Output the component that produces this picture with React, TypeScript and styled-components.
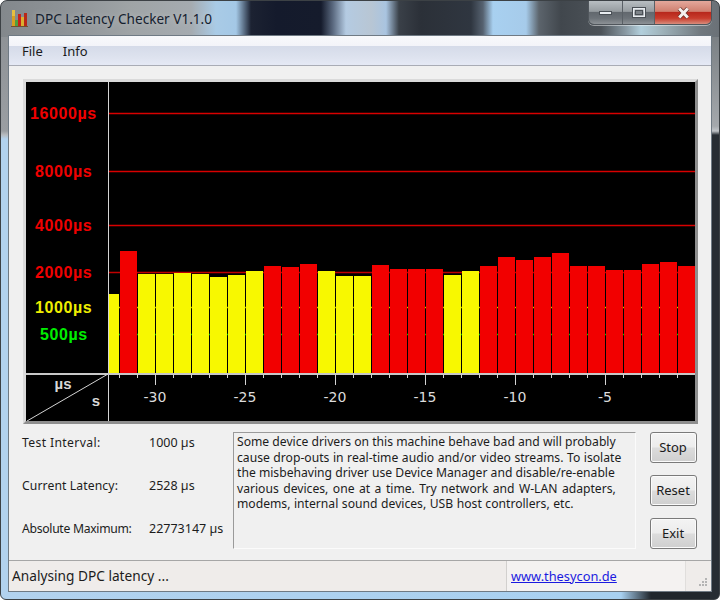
import React from "react";
import styled, { createGlobalStyle } from "styled-components";

const GlobalStyle = createGlobalStyle`
  html, body {
    margin: 0;
    padding: 0;
    background: #fff;
  }
`;

const uiFont = `"Noto Sans", "Open Sans", sans-serif`;

const titleGlass = `linear-gradient(90deg,
  #83888c 0, #8d9296 60px, #9fa4a6 130px, #a5abb0 190px, #a9cbe6 215px, #a4c8e6 235px,
  #1c2232 250px, #141a2c 275px, #151b2c 320px, #5b6a80 332px, #b4cbe2 345px, #b8c6d4 370px,
  #a9c4e0 385px, #3a4048 398px, #2b3038 420px, #2f3640 470px, #566270 482px, #a8d0f0 492px,
  #a6cbea 525px, #5c646c 538px, #41474d 560px, #4c5258 600px, #8a9aa4 625px, #b2cfdc 640px,
  #a0b4bc 660px, #70787e 700px, #6a7076 720px)`;

const Frame = styled.div`
  box-sizing: border-box;
  width: 720px;
  height: 600px;
  padding: 0 8px 8px;
  display: flex;
  flex-direction: column;
  border: 1px solid #3c4145;
  border-radius: 7px 7px 6px 6px;
  font-family: ${uiFont};
  color: #1c1c1c;
  background:
    ${titleGlass} top / 100% 36px no-repeat,
    linear-gradient(#8a8e92 0, #9a9ea2 130px, #b8bcc0 134px, #b2d2ee 138px, #b2d2ee 100%) left / 9px 100% no-repeat,
    linear-gradient(#6a7074 0, #a4a8ac 125px, #c0c4c8 130px, #272d33 134px, #272d33 100%) right / 9px 100% no-repeat,
    linear-gradient(90deg, #b2d2ee 0, #a8d0f0 620px, #20262c 650px, #20262c 100%);
`;

const TitleBar = styled.header`
  flex: 0 0 35px;
  display: flex;
  align-items: flex-start;
`;

const AppIcon = styled.svg`
  flex: none;
  width: 17px;
  height: 18px;
  margin: 8px 7px 0 2px;
`;

const TitleText = styled.h1`
  flex: 1;
  margin: 9px 0 0;
  font-size: 13.6px;
  line-height: 18px;
  font-weight: 400;
  color: #14202e;
  text-shadow: 0 0 6px rgba(255, 255, 255, 0.35);
`;

const CaptionButtons = styled.div`
  display: flex;
  height: 23px;
  margin-right: -1px;
  border: 1px solid #50565c;
  border-top: 0;
  border-radius: 0 0 6px 6px;
  overflow: hidden;
  box-shadow: 0 1px 0 rgba(255, 255, 255, 0.45);
`;

const CaptionButton = styled.div<{ $width: number; $close?: boolean }>`
  box-sizing: border-box;
  width: ${({ $width }) => $width}px;
  display: flex;
  align-items: center;
  justify-content: center;
  border-right: ${({ $close }) => ($close ? "0" : "1px solid #5a6066")};
  background: ${({ $close }) =>
    $close
      ? "linear-gradient(#e4a89c 0, #d08070 45%, #b8281c 50%, #c83c2c 75%, #d88c7c 100%)"
      : "linear-gradient(#b8bec2 0, #969ca0 45%, #62686e 50%, #6c7278 75%, #8d9296 100%)"};
`;

const Client = styled.div`
  flex: 1;
  min-height: 0;
  display: flex;
  flex-direction: column;
  background: #f0f0f0;
  box-shadow: 0 0 0 1px #6f7a84;
`;

const MenuBar = styled.nav`
  flex: 0 0 29px;
  display: flex;
  align-items: center;
  gap: 20px;
  padding-left: 13px;
  font-size: 13px;
  border-bottom: 1px solid #a9acb5;
  background: linear-gradient(#f8f9fb 0, #f3f4f9 33%, #d5dbe9 36%, #dde2ee 70%, #e5e9f5 100%);
`;

const MenuItem = styled.span`
  color: #1a1a1a;
`;

const ChartPanel = styled.section`
  box-sizing: border-box;
  flex: none;
  width: 675px;
  height: 345px;
  margin: 13px 0 0 14px;
  border: 3px solid;
  border-color: #dadada #8e8e8e #8e8e8e #dadada;
  background: #000;
`;

const ChartSvg = styled.svg`
  display: block;
  width: 669px;
  height: 339px;
`;

const AxisLabel = styled.text`
  font-family: "Liberation Sans", sans-serif;
  font-size: 16px;
  font-weight: 700;
  letter-spacing: 0.6px;
`;

const TimeLabel = styled.text`
  font-family: "DejaVu Sans", sans-serif;
  font-size: 14px;
  fill: #dcdcdc;
  text-anchor: middle;
`;

const CornerLabel = styled.text`
  font-family: "Liberation Sans", sans-serif;
  font-size: 15px;
  font-weight: 700;
  fill: #d8d8d8;
  text-anchor: middle;
`;

const InfoRow = styled.section`
  flex: none;
  display: flex;
  height: 117px;
  margin: 8px 0 0 13px;
`;

const Metrics = styled.dl`
  flex: 0 0 211px;
  margin: 0;
  display: grid;
  grid-template-columns: 127px auto;
  grid-auto-rows: 22px;
  row-gap: 21px;
  font-size: 12.2px;
  line-height: 22px;
`;

const MetricName = styled.dt<{ $spacing: number }>`
  margin: 0;
  letter-spacing: ${({ $spacing }) => $spacing}px;
`;

const MetricValue = styled.dd`
  margin: 0;
  white-space: nowrap;
  font-size: 12.5px;
`;

const Message = styled.div`
  box-sizing: border-box;
  flex: 0 0 403px;
  padding: 1px 3px;
  font-size: 12.15px;
  line-height: 15.6px;
  white-space: nowrap;
  border: 1px solid;
  border-color: #9a9a9a #fbfbfb #fbfbfb #9a9a9a;
`;

const MessageLine = styled.div<{ $wordSpacing?: number }>`
  word-spacing: ${({ $wordSpacing }) => $wordSpacing ?? 0}px;
`;

const Buttons = styled.div`
  flex: none;
  display: flex;
  flex-direction: column;
  justify-content: space-between;
  margin-left: 14px;
`;

const Button = styled.button`
  box-sizing: border-box;
  width: 47px;
  height: 31px;
  padding: 0 1px 2px 0;
  font-family: ${uiFont};
  font-size: 13px;
  color: #1a1a1a;
  border: 1px solid #7a7a7a;
  border-radius: 3px;
  box-shadow: inset 0 0 0 1px #fbfbfb;
  background: linear-gradient(#f3f3f3 0, #ececec 48%, #dcdcdc 52%, #cfcfcf 100%);
`;

const StatusBar = styled.footer`
  flex: 0 0 28px;
  display: flex;
  margin-top: auto;
  border-top: 1px solid #a6a6a6;
  line-height: 30px;
  background: #efecea;
`;

const StatusMain = styled.div`
  flex: 0 0 498px;
  box-sizing: border-box;
  padding-left: 3px;
  font-size: 13.7px;
  border-right: 1px solid #d2d0ce;
`;

const StatusLink = styled.a`
  flex: 0 0 179px;
  box-sizing: border-box;
  padding-left: 4px;
  font-size: 12.8px;
  color: #1a1ae0;
  text-decoration: underline;
  background: #f4f2f1;
  border-right: 1px solid #e0dedc;
`;

const Grip = styled.svg`
  align-self: flex-end;
  width: 12px;
  height: 12px;
  margin: 0 0 2px 10px;
`;

// bar tops in screen pixels, the first one is cut off by the axis
const bars: { top: number; hot: boolean }[] = [
  [251, 1], [274, 0], [274, 0], [273, 0], [274, 0], [277, 0], [275, 0], [271, 0],
  [266, 1], [267, 1], [264, 1], [271, 0], [276, 0], [276, 0], [265, 1], [269, 1],
  [269, 1], [269, 1], [275, 0], [271, 0], [266, 1], [257, 1], [260, 1], [257, 1],
  [253, 1], [266, 1], [266, 1], [270, 1], [270, 1], [264, 1], [262, 1], [266, 1],
].map(([top, hot]) => ({ top, hot: hot === 1 }));

const RED = "#f20000";
const YELLOW = "#f8f800";

const gridLines = [
  { y: 113, color: "#d80000", label: "16000µs", x: 30, fill: "#f00000" },
  { y: 171, color: "#d80000", label: "8000µs", x: 35, fill: "#f00000" },
  { y: 225, color: "#d80000", label: "4000µs", x: 35, fill: "#f00000" },
  { y: 272, color: "#c00000", label: "2000µs", x: 35, fill: "#f00000" },
  { y: 307, color: "#c0c000", label: "1000µs", x: 35, fill: "#eeee00" },
  { y: 334, color: "#00c000", label: "500µs", x: 40, fill: "#00ee00" },
];

const timeLabels = [-30, -25, -20, -15, -10, -5];

const Chart = () => (
  <ChartSvg viewBox="26 82 669 339">
    {gridLines.map(line => (
      <React.Fragment key={line.label}>
        <rect x={109} y={line.y - 0.25} width={586} height={1.5} fill={line.color} />
        <AxisLabel x={line.x} y={line.y + 6} fill={line.fill}>
          {line.label}
        </AxisLabel>
      </React.Fragment>
    ))}

    <rect x={109} y={294} width={10} height={79} fill={YELLOW} />
    {bars.map((bar, i) => (
      <rect
        key={i}
        x={120 + i * 18}
        y={bar.top}
        width={17}
        height={373 - bar.top}
        fill={bar.hot ? RED : YELLOW}
      />
    ))}

    <rect x={108} y={82} width={1} height={339} fill="#d4d4d4" />
    <rect x={26} y={373} width={669} height={2} fill="#c8c8c8" />
    <line x1={27} y1={421} x2={108} y2={374} stroke="#d4d4d4" strokeWidth={1} />

    {bars.map((_, i) => {
      const x = 119 + i * 18;
      const major = (x - 155) % 90 === 0;
      return <rect key={i} x={x} y={374} width={1} height={major ? 11 : 4} fill="#d4d4d4" />;
    })}

    {timeLabels.map((value, i) => (
      <TimeLabel key={value} x={155 + i * 90} y={402}>
        {value}
      </TimeLabel>
    ))}
    <CornerLabel x={63} y={389}>
      µs
    </CornerLabel>
    <CornerLabel x={96} y={406}>
      s
    </CornerLabel>
  </ChartSvg>
);

const App = () => (
  <>
    <GlobalStyle />
    <Frame>
      <TitleBar>
        <AppIcon viewBox="0 0 17 18">
          <rect x={1} y={1} width={3} height={16} fill="#d8a020" />
          <rect x={1} y={1} width={3} height={6} fill="#e8c040" />
          <rect x={4} y={11} width={3} height={6} fill="#50a040" />
          <rect x={7} y={5} width={3} height={12} fill="#c82018" />
          <rect x={10} y={8} width={3} height={9} fill="#d8b030" />
          <rect x={13} y={4} width={3} height={13} fill="#b82818" />
          <rect x={0} y={17} width={17} height={1} fill="#705030" />
        </AppIcon>
        <TitleText>DPC Latency Checker V1.1.0</TitleText>
        <CaptionButtons>
          <CaptionButton $width={34}>
            <svg width="13" height="6" viewBox="0 0 13 6">
              <rect x={0.5} y={1.5} width={12} height={3} fill="#e8ecf0" stroke="#4a5056" strokeWidth={1} />
            </svg>
          </CaptionButton>
          <CaptionButton $width={32}>
            <svg width="14" height="11" viewBox="0 0 14 11">
              <rect x={1.5} y={1.5} width={11} height={8} fill="none" stroke="#e8ecf0" strokeWidth={2} />
              <rect x={0.5} y={0.5} width={13} height={10} fill="none" stroke="#4a5056" strokeWidth={1} />
              <rect x={3.5} y={3.5} width={7} height={4} fill="#7c8288" stroke="#4a5056" strokeWidth={1} />
            </svg>
          </CaptionButton>
          <CaptionButton $width={56} $close>
            <svg width="13" height="12" viewBox="0 0 13 12">
              <path d="M2.2 1.5 L10.8 10.5 M10.8 1.5 L2.2 10.5" stroke="#6a3028" strokeWidth={4.4} fill="none" />
              <path d="M2.2 1.5 L10.8 10.5 M10.8 1.5 L2.2 10.5" stroke="#f4f0ee" strokeWidth={3} fill="none" />
            </svg>
          </CaptionButton>
        </CaptionButtons>
      </TitleBar>

      <Client>
        <MenuBar>
          <MenuItem>File</MenuItem>
          <MenuItem>Info</MenuItem>
        </MenuBar>

        <ChartPanel>
          <Chart />
        </ChartPanel>

        <InfoRow>
          <Metrics>
            <MetricName $spacing={0.35}>Test Interval:</MetricName>
            <MetricValue>1000 µs</MetricValue>
            <MetricName $spacing={0.1}>Current Latency:</MetricName>
            <MetricValue>2528 µs</MetricValue>
            <MetricName $spacing={-0.3}>Absolute Maximum:</MetricName>
            <MetricValue>22773147 µs</MetricValue>
          </Metrics>
          <Message>
            <MessageLine>Some device drivers on this machine behave bad and will probably</MessageLine>
            <MessageLine $wordSpacing={0.4}>cause drop-outs in real-time audio and/or video streams. To isolate</MessageLine>
            <MessageLine>the misbehaving driver use Device Manager and disable/re-enable</MessageLine>
            <MessageLine $wordSpacing={1.3}>various devices, one at a time. Try network and W-LAN adapters,</MessageLine>
            <MessageLine $wordSpacing={0.4}>modems, internal sound devices, USB host controllers, etc.</MessageLine>
          </Message>
          <Buttons>
            <Button>Stop</Button>
            <Button>Reset</Button>
            <Button>Exit</Button>
          </Buttons>
        </InfoRow>

        <StatusBar>
          <StatusMain>Analysing DPC latency ...</StatusMain>
          <StatusLink href="#">www.thesycon.de</StatusLink>
          <Grip viewBox="0 0 12 12">
            {[[9, 1], [6, 4], [9, 4], [3, 7], [6, 7], [9, 7]].map(([x, y]) => (
              <rect key={`${x}-${y}`} x={x} y={y} width={2} height={2} fill="#b4b4b4" />
            ))}
          </Grip>
        </StatusBar>
      </Client>
    </Frame>
  </>
);

export default App;
